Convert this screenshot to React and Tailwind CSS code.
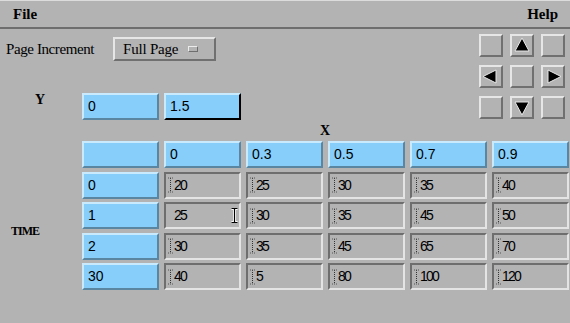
import React from "react";

const serif = { fontFamily: '"Liberation Serif", "DejaVu Serif", serif' };
const sans = { fontFamily: '"Liberation Sans", Arial, sans-serif' };

function Caret() {
  return (
    <svg width="5" height="16" viewBox="0 0 5 16" className="shrink-0">
      <line x1="2.5" y1="1" x2="2.5" y2="15" stroke="#333" strokeWidth="1" strokeDasharray="1 1" />
      <line x1="0" y1="1" x2="5" y2="1" stroke="#555" strokeWidth="1" strokeDasharray="1 1" />
      <line x1="0" y1="15" x2="5" y2="15" stroke="#555" strokeWidth="1" strokeDasharray="1 1" />
    </svg>
  );
}

function Blue({ children, focus }) {
  return (
    <div
      className={
        "w-[77px] h-[27px] bg-[#87cefa] border-2 border-t-[#c9e9fc] border-l-[#c9e9fc] flex items-center pl-[4px] text-[14px] text-black " +
        (focus ? "border-r-black border-b-black" : "border-r-[#5a86a1] border-b-[#5a86a1]")
      }
      style={sans}
    >
      {children}
    </div>
  );
}

function Grey({ v, active }) {
  return (
    <div
      className="w-[77px] h-[27px] bg-[#b3b3b3] border-2 border-t-[#6e6e6e] border-l-[#6e6e6e] border-r-[#e4e4e4] border-b-[#e4e4e4] flex items-center pl-[2px] text-[14px] text-black tracking-[-1.8px] relative"
      style={sans}
    >
      {active ? (
        <>
          <span className="pl-[6px]">{v}</span>
          <svg width="7" height="15" viewBox="0 0 7 15" className="absolute left-[65px] top-[4px]">
            <path d="M0.5 0.5H6.5M3.5 0.5V14.5M0.5 14.5H6.5" stroke="#fff" strokeWidth="3" />
            <path d="M0.5 0.5H6.5M3.5 0.5V14.5M0.5 14.5H6.5" stroke="#000" strokeWidth="1.2" />
          </svg>
        </>
      ) : (
        <>
          <Caret />
          <span className="pl-[1px]">{v}</span>
        </>
      )}
    </div>
  );
}

function ArrowBtn({ dir }) {
  const tri = {
    up: "M12 4 L19 17 L5 17 Z",
    down: "M12 19 L19 6 L5 6 Z",
    left: "M4 11.5 L17 5 L17 18 Z",
    right: "M20 11.5 L7 5 L7 18 Z",
  };
  return (
    <div className="w-[24px] h-[23px] bg-[#b3b3b3] border-2 border-t-[#e6e6e6] border-l-[#e6e6e6] border-r-[#707070] border-b-[#707070] flex items-center justify-center">
      {dir && (
        <svg width="20" height="19" viewBox="2 2 20 19">
          <path d={tri[dir]} fill="#000" stroke="#e8e8e8" strokeWidth="1" />
        </svg>
      )}
    </div>
  );
}

const xs = ["0", "0.3", "0.5", "0.7", "0.9"];
const rows = [
  ["0", ["20", "25", "30", "35", "40"]],
  ["1", ["25", "30", "35", "45", "50"]],
  ["2", ["30", "35", "45", "65", "70"]],
  ["30", ["40", "5", "80", "100", "120"]],
];

export default function App() {
  return (
    <div className="w-[570px] h-[323px] bg-[#b3b3b3] overflow-hidden flex flex-col text-black">
      <div
        className="h-[29px] shrink-0 border-t border-t-[#dcdcdc] border-b-2 border-b-[#6e6e6e] flex items-center justify-between pl-[13px] pr-[12px] text-[15px] font-bold"
        style={serif}
      >
        <span>File</span>
        <span>Help</span>
      </div>

      <div className="flex justify-between">
        <div className="flex flex-col">
          <div className="flex items-center mt-[8px] h-[24px]">
            <span className="pl-[6px] w-[113px] text-[15px] tracking-[-0.4px]" style={serif}>
              Page Increment
            </span>
            <div
              className="w-[103px] h-[24px] border-2 border-t-[#e6e6e6] border-l-[#e6e6e6] border-r-[#707070] border-b-[#707070] flex items-center pl-[8px] text-[15px] tracking-[-0.2px]"
              style={serif}
            >
              <span>Full Page</span>
              <span className="ml-[10px] w-[10px] h-[6px] border border-t-[#ececec] border-l-[#ececec] border-r-[#6e6e6e] border-b-[#6e6e6e]" />
            </div>
          </div>
          <div className="flex mt-[32px]">
            <div className="w-[82px] pl-[35px] text-[14px] font-bold leading-none pt-[0px]" style={serif}>
              Y
            </div>
            <div className="flex gap-[5px]">
              <Blue>0</Blue>
              <Blue focus>1.5</Blue>
            </div>
          </div>
        </div>
        <div className="grid grid-cols-[24px_24px_24px] gap-x-[7px] gap-y-[7px] mt-[5px] mr-[5px]">
          <ArrowBtn />
          <ArrowBtn dir="up" />
          <ArrowBtn />
          <ArrowBtn dir="left" />
          <ArrowBtn />
          <ArrowBtn dir="right" />
          <ArrowBtn />
          <ArrowBtn dir="down" />
          <ArrowBtn />
        </div>
      </div>

      <div className="h-[21px] flex items-center pl-[320px] text-[14px] font-bold" style={serif}>
        X
      </div>

      <div className="flex">
        <div className="w-[82px] flex flex-col">
          <div className="h-[31px]" />
          <div className="flex-1 flex items-center pl-[11px] text-[12px] font-bold tracking-[-1px]" style={serif}>
            TIME
          </div>
        </div>
        <div className="flex flex-col gap-[3.5px]">
          <div className="flex gap-[5px]">
            <Blue></Blue>
            {xs.map((x) => (
              <Blue key={x}>{x}</Blue>
            ))}
          </div>
          {rows.map(([t, vals], ri) => (
            <div key={t} className="flex gap-[5px]">
              <Blue>{t}</Blue>
              {vals.map((v, ci) => (
                <Grey key={ci} v={v} active={ri === 1 && ci === 0} />
              ))}
            </div>
          ))}
        </div>
      </div>
    </div>
  );
}
